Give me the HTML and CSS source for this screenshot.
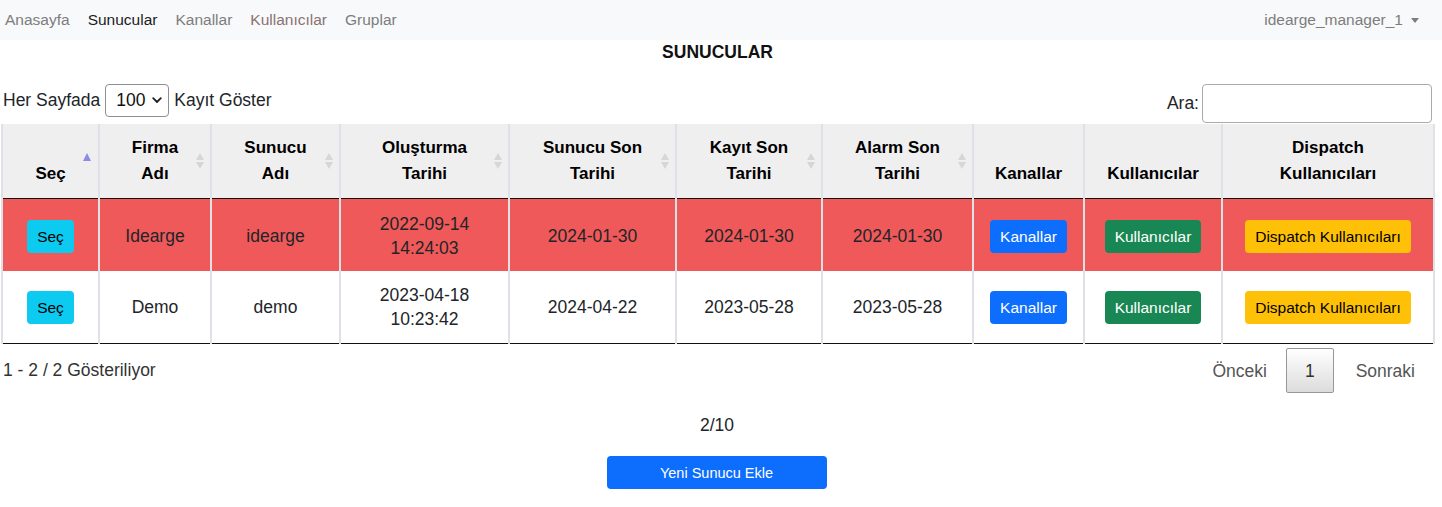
FILE: index.html
```html
<!DOCTYPE html>
<html lang="tr">
<head>
<meta charset="utf-8">
<title>Sunucular</title>
<link rel="stylesheet" href="styles.css">
</head>
<body>
<nav class="navbar">
  <div class="nav-left">
    <a class="nav-link">Anasayfa</a>
    <a class="nav-link active">Sunucular</a>
    <a class="nav-link">Kanallar</a>
    <a class="nav-link tinted">Kullanıcılar</a>
    <a class="nav-link">Gruplar</a>
  </div>
  <div class="nav-right">
    <a class="nav-link user">idearge_manager_1<span class="caret"></span></a>
  </div>
</nav>
<main class="page">
  <h1 class="title">SUNUCULAR</h1>
  <div class="dt-top">
    <div class="length">
      <span>Her Sayfada</span>
      <div class="select"><span>100</span><svg class="chev" width="10" height="7" viewBox="0 0 10 7"><path d="M1.2 1.2 L5 5 L8.8 1.2" fill="none" stroke="#222" stroke-width="1.8" stroke-linecap="round" stroke-linejoin="round"/></svg></div>
      <span>Kayıt Göster</span>
    </div>
    <div class="filter">
      <span>Ara:</span>
      <input class="search" type="text">
    </div>
  </div>
  <table class="grid">
    <colgroup>
      <col class="c1"><col class="c2"><col class="c3"><col class="c4"><col class="c5">
      <col class="c6"><col class="c7"><col class="c8"><col class="c9"><col class="c10">
    </colgroup>
    <thead>
      <tr>
        <th class="sorted">Seç</th>
        <th class="sortable">Firma<br>Adı</th>
        <th class="sortable">Sunucu<br>Adı</th>
        <th class="sortable">Oluşturma<br>Tarihi</th>
        <th class="sortable">Sunucu Son<br>Tarihi</th>
        <th class="sortable">Kayıt Son<br>Tarihi</th>
        <th class="sortable">Alarm Son<br>Tarihi</th>
        <th>Kanallar</th>
        <th>Kullanıcılar</th>
        <th>Dispatch<br>Kullanıcıları</th>
      </tr>
    </thead>
    <tbody>
      <tr class="row-alert">
        <td><span class="btn btn-info">Seç</span></td>
        <td>Idearge</td>
        <td>idearge</td>
        <td>2022-09-14<br>14:24:03</td>
        <td>2024-01-30</td>
        <td>2024-01-30</td>
        <td>2024-01-30</td>
        <td><span class="btn btn-primary">Kanallar</span></td>
        <td><span class="btn btn-success">Kullanıcılar</span></td>
        <td><span class="btn btn-warning">Dispatch Kullanıcıları</span></td>
      </tr>
      <tr>
        <td><span class="btn btn-info">Seç</span></td>
        <td>Demo</td>
        <td>demo</td>
        <td>2023-04-18<br>10:23:42</td>
        <td>2024-04-22</td>
        <td>2023-05-28</td>
        <td>2023-05-28</td>
        <td><span class="btn btn-primary">Kanallar</span></td>
        <td><span class="btn btn-success">Kullanıcılar</span></td>
        <td><span class="btn btn-warning">Dispatch Kullanıcıları</span></td>
      </tr>
    </tbody>
  </table>
  <div class="dt-bottom">
    <div class="info">1 - 2 / 2 Gösteriliyor</div>
    <div class="paging">
      <span class="pg prev">Önceki</span>
      <span class="pg current">1</span>
      <span class="pg next">Sonraki</span>
    </div>
  </div>
  <div class="count">2/10</div>
  <button class="btn-add" type="button">Yeni Sunucu Ekle</button>
</main>
</body>
</html>
```

FILE: styles.css
```css
* { box-sizing: border-box; }

body {
  margin: 0;
  font-family: "Liberation Sans", Arial, sans-serif;
  font-size: 17.5px;
  color: #212529;
  background: #fff;
}

/* navbar */
.navbar {
  display: flex;
  justify-content: space-between;
  align-items: center;
  height: 40px;
  background: #f8f9fa;
  padding: 0 23px 0 5px;
}
.nav-left {
  display: flex;
  gap: 18px;
}
.nav-link {
  font-size: 15.5px;
  line-height: 20px;
  color: #7d7d7d;
  text-decoration: none;
}
.nav-link.active { color: #1c1c1c; }
.nav-link.tinted { color: #8a7173; }
.user {
  display: flex;
  align-items: center;
}
.caret {
  display: inline-block;
  margin-left: 8px;
  width: 0;
  height: 0;
  border-top: 5px solid #7d7d7d;
  border-left: 4.5px solid transparent;
  border-right: 4.5px solid transparent;
}

/* page */
.page {
  padding: 0 10px 0 1px;
}
.title {
  margin: 0;
  padding: 2px 0 0 2px;
  text-align: center;
  font-size: 17.5px;
  line-height: 20px;
  font-weight: bold;
  color: #111;
}

.dt-top {
  margin-top: 22px;
  display: flex;
  justify-content: space-between;
  align-items: center;
  height: 39px;
}
.length {
  display: flex;
  align-items: center;
  gap: 5px;
  padding-left: 2px;
  margin-top: -6px;
}
.select {
  display: flex;
  align-items: center;
  justify-content: space-between;
  width: 64px;
  height: 33px;
  border: 1px solid #8f8f8f;
  border-radius: 4px;
  padding: 0 6px 0 10px;
  background: #fff;
  color: #111;
}
.chev { display: block; }

.filter {
  display: flex;
  align-items: center;
  gap: 3px;
}
.search {
  width: 230px;
  height: 39px;
  border: 1px solid #aaa;
  border-radius: 4px;
  padding: 5px;
  font: inherit;
  background: #fff;
}

/* table */
.grid {
  width: 1432px;
  margin-top: 1px;
  border-collapse: collapse;
  table-layout: fixed;
}
.c1 { width: 97px; }
.c2 { width: 112px; }
.c3 { width: 129px; }
.c4 { width: 169px; }
.c5 { width: 167px; }
.c6 { width: 146px; }
.c7 { width: 151px; }
.c8 { width: 111px; }
.c9 { width: 138px; }
.c10 { width: 212px; }

.grid th {
  position: relative;
  background: #efefef;
  color: #000;
  font-weight: bold;
  font-size: 17px;
  line-height: 26px;
  padding: 11px 14px 11px;
  vertical-align: bottom;
  text-align: center;
  border-left: 2px solid #dee2e6;
  border-right: 2px solid #dee2e6;
  border-bottom: 1px solid #111;
}
.grid th.sortable::before,
.grid th.sortable::after,
.grid th.sorted::before {
  content: "";
  position: absolute;
  right: 6px;
  width: 0;
  height: 0;
  border-left: 4.5px solid transparent;
  border-right: 4.5px solid transparent;
}
.grid th.sortable::before {
  top: 29px;
  border-bottom: 7px solid #d6d6d6;
}
.grid th.sortable::after {
  top: 38px;
  border-top: 7px solid #d6d6d6;
}
.grid th.sorted::before {
  top: 29px;
  right: 7px;
  border-bottom: 8px solid #8c8ce6;
}

.grid td {
  padding: 12px 8px;
  line-height: 24px;
  font-size: 17.5px;
  text-align: center;
  vertical-align: middle;
  border-left: 2px solid #dee2e6;
  border-right: 2px solid #dee2e6;
  color: #212529;
}
.grid tbody tr:first-child td {
  padding-top: 13px;
  padding-bottom: 11px;
}
.grid tbody tr:last-child td {
  border-bottom: 1px solid #111;
}
.row-alert td {
  background: #ef5959;
}

.btn {
  display: inline-block;
  font-size: 15.5px;
  line-height: 23px;
  padding: 5px 10px;
  border-radius: 4px;
  vertical-align: middle;
}
.btn-info { background: #0dcaf0; color: #000; }
.btn-primary { background: #0d6efd; color: #fff; }
.btn-success { background: #198754; color: #fff; }
.btn-warning { background: #ffc107; color: #000; }

/* bottom */
.dt-bottom {
  margin-top: 4px;
  display: flex;
  justify-content: space-between;
  align-items: center;
}
.info {
  color: #333;
  padding-left: 2px;
}
.paging {
  display: flex;
  align-items: center;
  margin-right: -3px;
}
.pg {
  padding: 9.5px 19px;
  line-height: 24px;
  border: 1px solid transparent;
  color: #555;
}
.pg.prev { padding-right: 18px; }
.pg.next { margin-left: 2px; }
.pg.current {
  padding: 9.5px 18px;
  color: #333;
  border: 1px solid #979797;
  border-radius: 2px;
  background: linear-gradient(to bottom, #fff 0%, #dcdcdc 100%);
}

.count {
  margin-top: 20px;
  padding-left: 1px;
  text-align: center;
  line-height: 24px;
}
.btn-add {
  display: block;
  margin: 19px auto 0;
  width: 220px;
  height: 33px;
  border: 0;
  border-radius: 4px;
  background: #0d6efd;
  color: #fff;
  font-family: "Liberation Sans", Arial, sans-serif;
  font-size: 14.5px;
}
```
